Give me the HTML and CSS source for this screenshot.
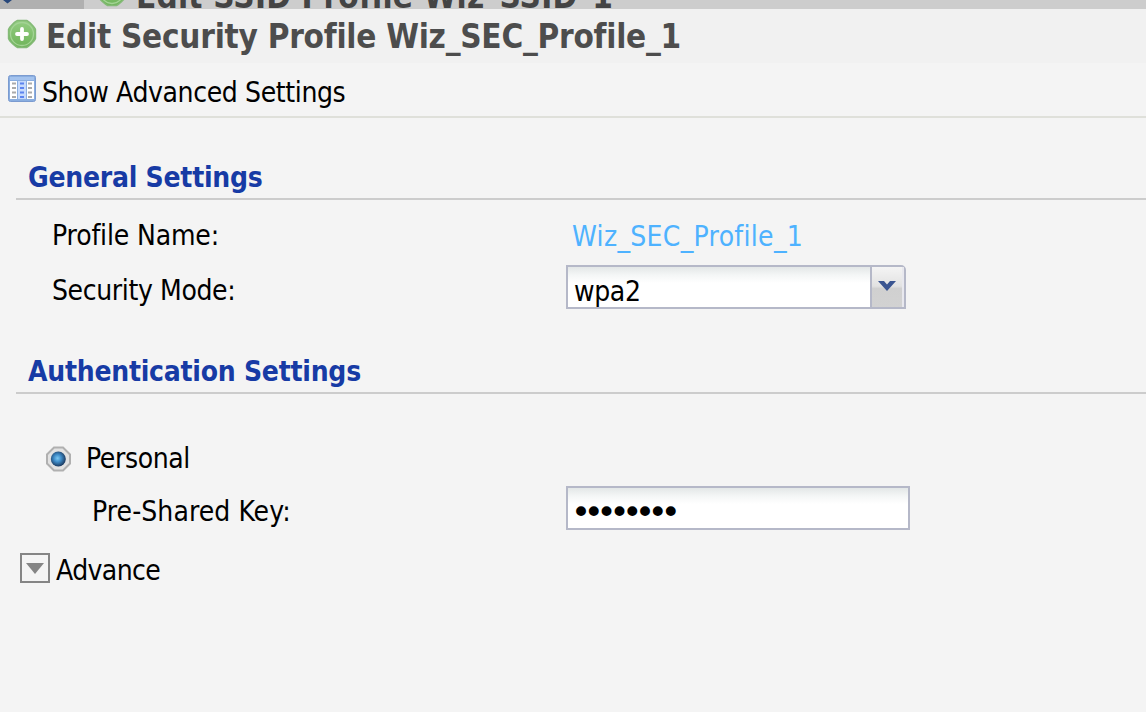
FILE: index.html
```
<!DOCTYPE html>
<html lang="en">
<head>
    <meta charset="UTF-8">
    <title>Edit Security Profile</title>
    <link rel="stylesheet" href="styles.css">
</head>
<body>
<svg class="defs">
    <defs>
        <linearGradient id="green" x1="0" y1="0" x2="0" y2="1">
            <stop offset="0" stop-color="#94cd82"/>
            <stop offset="1" stop-color="#6fb45a"/>
        </linearGradient>
        <radialGradient id="blue" cx=".45" cy=".45" r=".55">
            <stop offset="0" stop-color="#7cc8f2"/>
            <stop offset=".45" stop-color="#3f8cc8"/>
            <stop offset="1" stop-color="#1c3a60"/>
        </radialGradient>
        <symbol id="add" viewBox="0 0 30 30">
            <path d="M10.500 1.500H19.500Q21 1.800 24.500 5.200T28.500 10.500V19.500Q28 21.500 24.500 24.800T19.500 28.500H10.500Q9 28 5.500 24.800T1.500 19.500V10.500Q2 8.500 5.500 5.200T10.500 1.500Z" fill="url(#green)" stroke="#84b977" stroke-width="1.400"/>
            <circle cx="15" cy="15" r="11.500" fill="none" stroke="#a3d395" stroke-width="1.300"/>
            <path d="M15 10V20M10 15H20" stroke="#fff" stroke-width="3.800" stroke-linecap="round"/>
        </symbol>
    </defs>
</svg>
<div class="back">
    <div class="back-tab"><svg width="12" height="4"><path d="M3 0H12L7.500 3.500Z" fill="#27477a"/></svg></div>
    <svg class="back-icon" width="30" height="30"><use href="#add"/></svg>
    <div class="back-title">Edit SSID Profile Wiz_SSID_1</div>
</div>
<div class="header">
    <svg class="add-icon" width="30" height="30"><use href="#add"/></svg>
    <h1 class="title">Edit Security Profile Wiz_SEC_Profile_1</h1>
</div>
<div class="toolbar">
    <svg class="list-icon" width="28" height="28" viewBox="0 0 28 28">
        <rect x=".5" y=".5" width="27" height="26" rx="2" fill="#8aaee0" stroke="#7b9bd0"/>
        <rect x="2" y="2" width="24" height="3" fill="#a4c3ee"/>
        <rect x="2" y="6" width="7" height="18" fill="#fff"/>
        <rect x="10" y="6" width="8" height="18" fill="#c6dafc"/>
        <rect x="19" y="6" width="7" height="18" fill="#fff"/>
        <path d="M4 8.500H8M4 13H8M4 17.500H8M4 22H8M20 8.500H24M20 13H24M20 17.500H24M20 22H24" stroke="#aaa" stroke-width="1.800"/>
        <path d="M12 8.500H16M12 13H16M12 17.500H16M12 22H16" stroke="#5b83f0" stroke-width="2"/>
    </svg>
    <span class="text t-show">Show Advanced Settings</span>
</div>
<div class="content">
    <h2 class="section">General Settings</h2>
    <div class="row row-name">
        <label class="text">Profile Name:</label>
        <span class="text link">Wiz_SEC_Profile_1</span>
    </div>
    <div class="row row-mode">
        <label class="text">Security Mode:</label>
        <div class="select">
            <span class="text value">wpa2</span>
            <div class="arrow"><svg width="18" height="12" viewBox="0 0 18 12"><path d="M0 1H6L9 4.500L12 1H18L9 11Z" fill="#3a5591"/></svg></div>
        </div>
    </div>
    <h2 class="section">Authentication Settings</h2>
    <div class="row row-personal">
        <svg class="radio" width="26" height="26" viewBox="0 0 26 26">
            <path d="M8 1.500H17L24 8.500V17.500L17 24.500H8L1 17.500V8.500Z" fill="#e2e2e2" stroke="#b0b0b0" stroke-width="2"/>
            <circle cx="12.300" cy="13" r="7.500" fill="url(#blue)"/>
        </svg>
        <label class="text t-personal">Personal</label>
    </div>
    <div class="row row-key">
        <label class="text">Pre-Shared Key:</label>
        <input class="password" type="password" value="password">
    </div>
    <div class="row row-advance">
        <div class="toggle"><svg width="18" height="11" viewBox="0 0 18 11"><path d="M0 0H18L9 11Z" fill="#858585"/></svg></div>
        <span class="text t-advance">Advance</span>
    </div>
</div>
</body>
</html>
```
FILE: styles.css
```
*{
    margin:0;padding:0;
    box-sizing: border-box;
}
body{
    height:712px;
    overflow: hidden;
    background:#f4f4f4;
    font-family: Tahoma, "DejaVu Sans Condensed", "DejaVu Sans", sans-serif;
}
svg{
    display: block;
    flex:none;
}
.defs{
    position: absolute;
    width:0;
    height:0;
}
.back{
    display: flex;
    height:9px;
    overflow: hidden;
    background:#cdcdcd;
}
.back-tab{
    width:84px;
    height:9px;
    background:#b0b0b0;
}
.back-icon{
    margin:-23px 0 0 13px;
}
.back-title{
    margin:-31px 0 0 9px;
    height:50px;
    font-size: 33px;
    font-weight: bold;
    line-height: 56px;
    letter-spacing: .2px;
    color:#444;
    white-space: nowrap;
}
.header{
    display: flex;
    height:54px;
    padding-left:7px;
    background:#f1f1f1;
}
.add-icon{
    margin-top:10px;
}
.title{
    margin-left:9px;
    font-size: 33px;
    line-height: 56px;
    letter-spacing: -.25px;
    color:#4d4d4d;
    white-space: nowrap;
}
.text{
    font-size: 28px;
    line-height: 42px;
    letter-spacing: -.38px;
    white-space: nowrap;
}
.toolbar{
    display: flex;
    height:55px;
    padding:9px 0 0 8px;
    border-bottom:2px solid #dfe0da;
}
.list-icon{
    margin-top:3px;
}
.t-show{
    margin-left:6px;
}
.content{
    padding-left:16px;
}
.section{
    height:82px;
    padding:39px 0 0 12px;
    border-bottom:2px solid #ccc;
    font-size: 28px;
    line-height: 42px;
    letter-spacing: -.25px;
    color:#173ba5;
    white-space: nowrap;
}
.row{
    display: flex;
}
.row-name{
    height:65px;
    padding:15px 0 0 36px;
}
.row-name label{
    width:520px;
    letter-spacing: -.15px;
}
.link{
    margin-top:1px;
    letter-spacing: .3px;
    color:#4eb2ff;
}
.row-mode{
    height:47px;
    padding-left:36px;
}
.row-mode label{
    width:514px;
    margin-top:5px;
}
.select{
    display: flex;
    width:340px;
    height:44px;
    border:2px solid #b5b8c8;
    border-top-right-radius:5px;
    background:#fff linear-gradient(#e3e7e7, #f4f6f6 8px, #fff 16px) no-repeat;
}
.value{
    width:302px;
    padding:4px 0 0 6px;
}
.arrow{
    width:34px;
    height:40px;
    padding:13px 0 0 6px;
    border-left:2px solid #b5b8c8;
    border-right:2px solid #e8e8ee;
    background:linear-gradient(#f4f4f4, #e2e2e2 48%, #d0d0d0 54%, #d2d2d2);
}
.row-personal{
    height:92px;
    padding:44px 0 0 30px;
}
.radio{
    margin-top:8px;
}
.t-personal{
    margin-left:14px;
}
.row-key{
    height:66px;
    padding-left:76px;
}
.row-key label{
    width:474px;
    margin-top:5px;
    letter-spacing: .07px;
}
.password{
    width:344px;
    height:44px;
    padding:8px 0 0 3px;
    border:2px solid #b5b8c8;
    background:#fff linear-gradient(#e3e7e7, #f4f6f6 8px, #fff 16px) no-repeat;
    font-family: "DejaVu Sans", sans-serif;
    font-size: 34px;
    letter-spacing: -7.25px;
    color:#000;
}
.row-advance{
    padding-left:4px;
}
.toggle{
    width:30px;
    height:30px;
    margin-top:1px;
    padding:8px 0 0 4px;
    border:2px solid #858585;
}
.t-advance{
    margin:-2px 0 0 6px;
    letter-spacing: -.6px;
}
```
